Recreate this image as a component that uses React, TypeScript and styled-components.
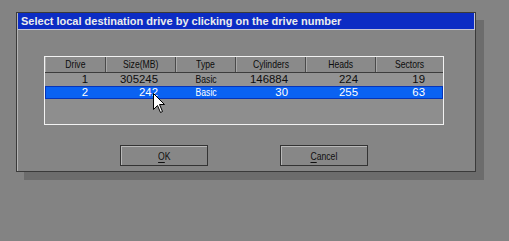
import React from "react";
import styled, { createGlobalStyle } from "styled-components";

const GlobalStyle = createGlobalStyle`
  html, body {
    margin: 0;
    padding: 0;
    background: #838383;
  }
  #root {
    width: 509px;
    height: 241px;
  }
`;

const Screen = styled.div`
  position: relative;
  width: 509px;
  height: 241px;
  padding: 12px 0 0 16px;
  box-sizing: border-box;
  background: #838383;
  overflow: hidden;
`;

const Dialog = styled.div`
  width: 460px;
  height: 160px;
  box-sizing: border-box;
  border: 1px solid #3a3a3a;
  background: #858585;
  box-shadow: inset 1px 0 0 #b4b4b4, 8px 8px 0 #6c6c6c;
  display: flex;
  flex-direction: column;
`;

const TitleBar = styled.div`
  margin-left: 1px;
  height: 17px;
  box-sizing: border-box;
  background: #0c2cc4;
  border: 1px solid #c4c4d4;
  border-left: none;
  border-top: none;
  color: #ececec;
  font-family: "Liberation Sans", Arial, sans-serif;
  font-weight: bold;
  font-size: 11px;
  line-height: 16px;
  padding-left: 3px;
  white-space: nowrap;
`;

const Body = styled.div`
  padding: 26px 0 0 27px;
  display: flex;
  flex-direction: column;
`;

const Table = styled.div`
  width: 400px;
  height: 69px;
  box-sizing: border-box;
  border: 1px solid #f2f2f2;
  background: #8e8e8e;
  font-family: "Liberation Sans", Arial, sans-serif;
  font-size: 11.5px;
`;

const Row = styled.div<{ $head?: boolean; $selected?: boolean }>`
  display: grid;
  grid-template-columns: 61px 70px 60px 70px 70px 67px;
  height: ${(p) => (p.$head ? "16px" : "13px")};
  box-sizing: border-box;
  background: ${(p) =>
    p.$head ? "#8a8a8a" : p.$selected ? "#0a62f2" : "#939393"};
  color: ${(p) => (p.$selected ? "#ffffff" : "#0c0c0c")};
  border-bottom: ${(p) => (p.$head ? "1px solid #3c3c3c" : "none")};
  outline: ${(p) => (p.$selected ? "1px solid #0634b8" : "none")};
  outline-offset: -1px;
`;

const HeadCell = styled.div<{ $last?: boolean }>`
  display: flex;
  align-items: center;
  justify-content: center;
  line-height: 15px;
  border-right: ${(p) => (p.$last ? "none" : "1px solid #4a4a4a")};
  box-shadow: inset 1px 0 0 #a8a8a8;
`;

const Cell = styled.div<{ $align?: "right" | "center" }>`
  display: flex;
  align-items: center;
  justify-content: ${(p) => (p.$align === "center" ? "center" : "flex-end")};
  padding-right: ${(p) => (p.$align === "center" ? "0" : "18px")};
  line-height: 13px;
`;

const Narrow = styled.span`
  display: inline-block;
  transform: scaleX(0.75);
  white-space: nowrap;
`;

const Num = styled.span`
  font-size: 11.4px;
`;

const ButtonRow = styled.div`
  display: flex;
  gap: 72px;
  padding: 20px 0 0 76px;
`;

const Button = styled.div`
  width: 88px;
  height: 21px;
  box-sizing: border-box;
  border: 1px solid #333333;
  background: #878787;
  box-shadow: inset 1px 1px 0 #b8b8b8;
  display: flex;
  align-items: center;
  justify-content: center;
  font-family: "Liberation Sans", Arial, sans-serif;
  font-size: 11.5px;
  color: #101010;
  u {
    text-underline-offset: 2px;
  }
`;

const Cursor = styled.svg`
  position: absolute;
  left: 153px;
  top: 93px;
`;

const columns = ["Drive", "Size(MB)", "Type", "Cylinders", "Heads", "Sectors"];

const drives = [
  { drive: 1, size: 305245, type: "Basic", cyl: 146884, heads: 224, sectors: 19 },
  { drive: 2, size: 242, type: "Basic", cyl: 30, heads: 255, sectors: 63 },
];

export default function App() {
  return (
    <>
      <GlobalStyle />
      <Screen>
        <Dialog>
          <TitleBar>Select local destination drive by clicking on the drive number</TitleBar>
          <Body>
            <Table>
              <Row $head>
                {columns.map((c, i) => (
                  <HeadCell key={c} $last={i === columns.length - 1}>
                    <Narrow>{c}</Narrow>
                  </HeadCell>
                ))}
              </Row>
              {drives.map((d) => (
                <Row key={d.drive} $selected={d.drive === 2}>
                  <Cell><Num>{d.drive}</Num></Cell>
                  <Cell><Num>{d.size}</Num></Cell>
                  <Cell $align="center"><Narrow>{d.type}</Narrow></Cell>
                  <Cell><Num>{d.cyl}</Num></Cell>
                  <Cell><Num>{d.heads}</Num></Cell>
                  <Cell><Num>{d.sectors}</Num></Cell>
                </Row>
              ))}
            </Table>
            <ButtonRow>
              <Button><Narrow><u>O</u>K</Narrow></Button>
              <Button><Narrow><u>C</u>ancel</Narrow></Button>
            </ButtonRow>
          </Body>
        </Dialog>
        <Cursor width="13" height="21" viewBox="0 0 13 21">
          <path
            d="M0.5 0.5 L0.5 16.5 L4.5 12.5 L7.5 19.5 L9.5 18.5 L6.5 11.5 L11.5 11.5 Z"
            fill="#ffffff"
            stroke="#000000"
            strokeWidth="1"
          />
        </Cursor>
      </Screen>
    </>
  );
}
